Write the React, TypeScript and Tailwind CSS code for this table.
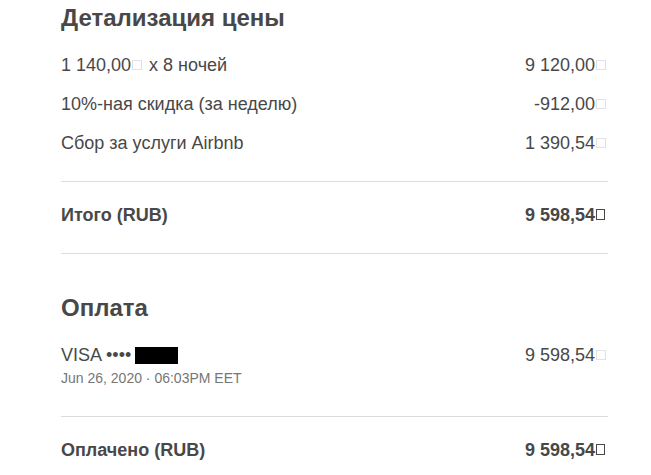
import type { ReactNode } from "react";

// missing-glyph box, as the rouble sign renders in the screenshot
function Tofu({ bold }: { bold?: boolean }) {
  return bold ? (
    <span className="mr-[3px] ml-[1px] inline-block h-[11px] w-[9px] border border-[#484848] align-[1px]" />
  ) : (
    <span className="mr-[2px] ml-[1px] inline-block h-[10px] w-[10px] border border-[#e2e2e2] align-[1px]" />
  );
}

function Row({ left, right, bold, className }: { left: ReactNode; right: ReactNode; bold?: boolean; className?: string }) {
  return (
    <div className={`flex h-[22px] items-center justify-between ${bold ? "font-bold" : ""} ${className ?? ""}`}>
      <span>{left}</span>
      <span>{right}</span>
    </div>
  );
}

export default function App() {
  return (
    <div className="min-h-[475px] bg-white font-['Liberation_Sans',Arial,sans-serif] text-[18px] text-[#484848]">
      <div className="ml-[61px] w-[547px] pt-[4px]">
        <h2 className="h-[28px] text-[24px] leading-[28px] font-bold">Детализация цены</h2>

        <Row
          className="mt-[22px]"
          left={
            <>
              1 140,00
              <Tofu /> x 8 ночей
            </>
          }
          right={
            <>
              9 120,00
              <Tofu />
            </>
          }
        />
        <Row
          className="mt-[17px]"
          left="10%-ная скидка (за неделю)"
          right={
            <>
              -912,00
              <Tofu />
            </>
          }
        />
        <Row
          className="mt-[17px]"
          left="Сбор за услуги Airbnb"
          right={
            <>
              1 390,54
              <Tofu />
            </>
          }
        />

        <div className="mt-[27px] h-px bg-[#dcdcdc]" />
        <Row
          bold
          className="mt-[22px]"
          left="Итого (RUB)"
          right={
            <>
              9 598,54
              <Tofu bold />
            </>
          }
        />
        <div className="mt-[27px] h-px bg-[#dcdcdc]" />

        <h2 className="mt-[40px] h-[28px] text-[24px] leading-[28px] font-bold">Оплата</h2>

        <div className="mt-[22px] flex justify-between">
          <div>
            <div className="flex h-[22px] items-center">
              VISA ••••
              <span className="ml-[4px] inline-block h-[17px] w-[43px] bg-black" />
            </div>
            <div className="mt-[3px] h-[18px] text-[14px] leading-[18px] text-[#767676]">
              Jun 26, 2020 · 06:03PM EET
            </div>
          </div>
          <div className="flex h-[22px] items-center">
            9 598,54
            <Tofu />
          </div>
        </div>

        <div className="mt-[29px] h-px bg-[#dcdcdc]" />
        <Row
          bold
          className="mt-[22px]"
          left="Оплачено (RUB)"
          right={
            <>
              9 598,54
              <Tofu bold />
            </>
          }
        />
      </div>
    </div>
  );
}
